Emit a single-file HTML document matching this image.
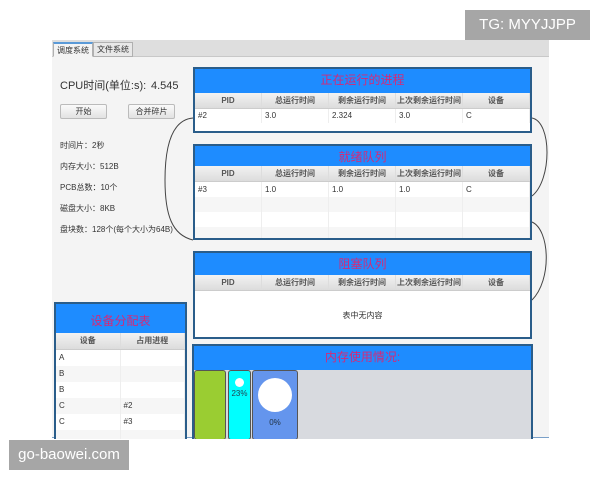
<!DOCTYPE html><html><head><meta charset="utf-8"><style>
*{margin:0;padding:0;box-sizing:border-box}
body{width:600px;height:480px;background:#fff;position:relative;overflow:hidden;font-family:"Liberation Sans","Noto Sans CJK SC",sans-serif;color:#333}
.a{position:absolute}
.app{left:52px;top:40px;width:497px;height:398px;background:#f4f4f4;border-bottom:1px solid #7aa0c8}
.tabs{left:52px;top:40px;width:497px;height:17px;background:#dedede;border-bottom:1px solid #c8c8c8}
.tab{top:42px;height:15px;font-size:8px;line-height:14px;padding:0 3px;border:1px solid #b0b0b0;background:#e8e8e8}
.p{background:#fff;border:2px solid #2a5d8a;overflow:hidden}
.h{background:#1e8cff;color:#d42a78;text-align:center;font-size:12px}
.th{display:flex;background:linear-gradient(#f2f2f2,#dcdcdc);font-size:8px;font-weight:bold;color:#555;border-bottom:1px solid #ccc}
.th div,.tr div{flex:1;border-right:1px solid #ddd;text-align:center}
.tr{display:flex;font-size:8px;color:#333}
.tr div{text-align:left;padding-left:3px;border-right:1px solid #eee}
.lt{font-size:8px;color:#333;left:60px}
.btn{font-size:8px;text-align:center;border:1px solid #bbb;border-radius:2px;background:linear-gradient(#fafafa,#e2e2e2);height:15px;line-height:13px}
.wm{background:#a6a6a6;color:#fff;font-size:15px;text-align:center}
</style></head><body>
<div class="a app"></div>
<div class="a tabs"></div>
<div class="a tab" style="left:53px;background:#f4f4f4;border-bottom-color:#f4f4f4;border-top:2px solid #5a9ad8">调度系统</div>
<div class="a tab" style="left:93px">文件系统</div>
<div class="a" style="left:60px;top:79px;font-size:11px;line-height:14px;color:#333">CPU时间(单位:s):</div>
<div class="a" style="left:151px;top:79px;font-size:11px;line-height:14px">4.545</div>
<div class="a btn" style="left:60px;top:104px;width:47px">开始</div>
<div class="a btn" style="left:128px;top:104px;width:47px">合并碎片</div>
<div class="a lt" style="top:140px">时间片：2秒</div>
<div class="a lt" style="top:161px">内存大小：512B</div>
<div class="a lt" style="top:182px">PCB总数：10个</div>
<div class="a lt" style="top:203px">磁盘大小：8KB</div>
<div class="a lt" style="top:224px">盘块数：128个(每个大小为64B)</div>
<svg class="a" style="left:0;top:0" width="600" height="480"><g fill="none" stroke="#444" stroke-width="1">
<path d="M193 118 C170 120 165 150 165 180 C165 215 172 235 193 240"/>
<path d="M532 118 C552 122 552 180 532 196"/>
<path d="M532 222 C550 230 552 280 532 300"/></g></svg>
<div class="a p" style="left:193px;top:67px;width:339px;height:66px">
<div class="h" style="height:24px;line-height:22px">正在运行的进程</div>
<div class="th" style="height:16px;line-height:15px"><div>PID</div><div>总运行时间</div><div>剩余运行时间</div><div>上次剩余运行时间</div><div>设备</div></div>
<div class="tr" style="height:14px;line-height:14px"><div>#2</div><div>3.0</div><div>2.324</div><div>3.0</div><div>C</div></div>
</div>
<div class="a p" style="left:193px;top:144px;width:339px;height:96px">
<div class="h" style="height:20px;line-height:22px">就绪队列</div>
<div class="th" style="height:16px;line-height:15px"><div>PID</div><div>总运行时间</div><div>剩余运行时间</div><div>上次剩余运行时间</div><div>设备</div></div>
<div><div class="tr" style="height:15px;line-height:15px;background:#fff"><div>#3</div><div>1.0</div><div>1.0</div><div>1.0</div><div>C</div></div>
<div class="tr" style="height:15px;background:#f6f6f6"><div></div><div></div><div></div><div></div><div></div></div>
<div class="tr" style="height:15px;background:#fff"><div></div><div></div><div></div><div></div><div></div></div>
<div class="tr" style="height:15px;background:#f6f6f6"><div></div><div></div><div></div><div></div><div></div></div></div>
</div>
<div class="a p" style="left:193px;top:251px;width:339px;height:88px">
<div class="h" style="height:22px;line-height:22px">阻塞队列</div>
<div class="th" style="height:16px;line-height:15px"><div>PID</div><div>总运行时间</div><div>剩余运行时间</div><div>上次剩余运行时间</div><div>设备</div></div>
<div style="font-size:8px;text-align:center;padding-top:19px">表中无内容</div>
</div>
<div class="a p" style="left:192px;top:344px;width:341px;height:95px;border-bottom:none;background:#d8dadf">
<div class="h" style="height:24px;line-height:22px">内存使用情况:</div>
<div class="a" style="left:0;top:24px;width:32px;height:70px;background:#9acd32;border:1px solid #555;border-radius:3px"></div>
<div class="a" style="left:34px;top:24px;width:23px;height:70px;background:#00ffff;border:1px solid #555;border-radius:3px;font-size:8px;text-align:center;color:#245">
<div style="width:9px;height:9px;border-radius:50%;background:#fff;margin:7px auto 2px"></div>23%</div>
<div class="a" style="left:58px;top:24px;width:46px;height:70px;background:#6495ed;border:1px solid #555;border-radius:3px;font-size:8px;text-align:center;color:#234">
<div style="width:34px;height:34px;border-radius:50%;background:#fff;margin:7px auto 6px"></div>0%</div>
</div>
<div class="a p" style="left:54px;top:302px;width:133px;height:137px;border-bottom:none">
<div class="h" style="height:29px;line-height:34px">设备分配表</div>
<div class="th" style="height:17px;line-height:16px"><div>设备</div><div>占用进程</div></div>
<div class="tr" style="height:16px;line-height:16px;background:#fff"><div>A</div><div></div></div>
<div class="tr" style="height:16px;line-height:16px;background:#f6f6f6"><div>B</div><div></div></div>
<div class="tr" style="height:16px;line-height:16px;background:#fff"><div>B</div><div></div></div>
<div class="tr" style="height:16px;line-height:16px;background:#f6f6f6"><div>C</div><div>#2</div></div>
<div class="tr" style="height:16px;line-height:16px;background:#fff"><div>C</div><div>#3</div></div>
<div class="tr" style="height:16px;background:#f6f6f6"><div></div><div></div></div>
</div>
<div class="a wm" style="left:465px;top:10px;width:125px;height:30px;line-height:30px">TG: MYYJJPP</div>
<div class="a wm" style="left:9px;top:440px;width:120px;height:30px;line-height:30px">go-baowei.com</div>
</body></html>
